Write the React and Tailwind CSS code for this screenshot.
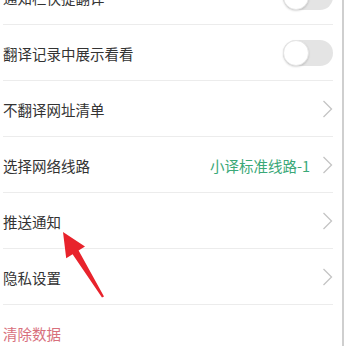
import React from 'react';

function Toggle() {
  return (
    <div className="relative w-[50px] h-[26px] rounded-full bg-[#e4e4e4]">
      <div className="absolute left-0 top-0 w-[26px] h-[26px] rounded-full bg-white border border-[#e6e6e6] shadow-[0_1px_2px_rgba(0,0,0,0.15)]" />
    </div>
  );
}

function Chevron() {
  return (
    <svg width="11" height="18" viewBox="0 0 11 18" fill="none">
      <path d="M1.5 1 L9.5 9 L1.5 17" stroke="#c4c4c4" strokeWidth="1.3" />
    </svg>
  );
}

const rows = [
  { label: '通知栏快捷翻译', right: 'toggle' },
  { label: '翻译记录中展示看看', right: 'toggle' },
  { label: '不翻译网址清单', right: 'chevron' },
  { label: '选择网络线路', right: 'chevron', value: '小译标准线路-1' },
  { label: '推送通知', right: 'chevron' },
  { label: '隐私设置', right: 'chevron' },
  { label: '清除数据', right: null, danger: true },
];

export default function App() {
  return (
    <div className="relative w-[346px] h-[346px] overflow-hidden bg-white font-['Noto_Sans_CJK_SC','Noto_Sans',sans-serif]">
      <div className="flex h-full">
        <div className="w-[333px] -mt-[31px] pl-[3px]">
          {rows.map(r => (
            <div key={r.label} className="flex items-center h-[56px] border-b border-[#ececec]">
              <span className={`flex-1 pt-[3px] text-[14.5px] ${r.danger ? 'text-[#d8707c]' : 'text-[#333333]'}`}>{r.label}</span>
              {r.value && <span className="pt-[3px] text-[14.5px] text-[#3aa878] mr-[12px]">{r.value}</span>}
              {r.right === 'toggle' && <Toggle />}
              {r.right === 'chevron' && <Chevron />}
            </div>
          ))}
        </div>
        <div className="ml-[9px] w-[2px] h-full bg-[#cfcfcf]" />
      </div>
      <svg className="absolute left-0 top-0" width="346" height="346" viewBox="0 0 346 346">
        <polygon
          points="63,232 85,246.6 78.6,250.6 104,296.5 102,297.5 72.6,254.2 66.2,258.2"
          fill="#e8232c"
        />
      </svg>
    </div>
  );
}
